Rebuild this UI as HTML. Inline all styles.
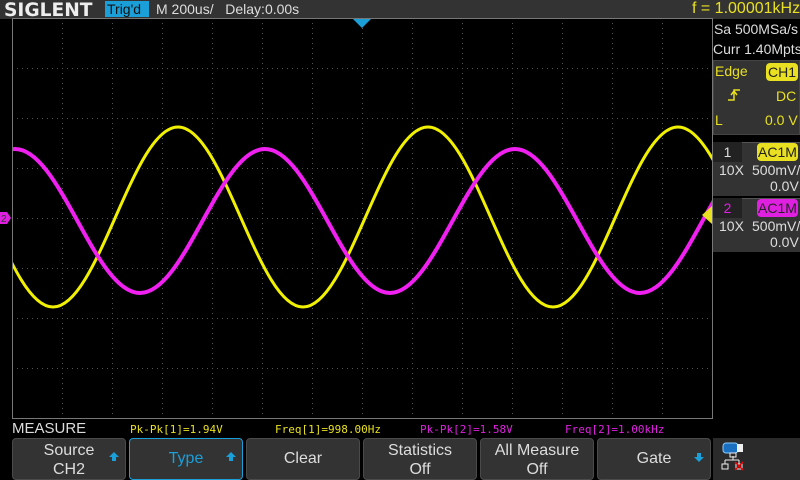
<!DOCTYPE html>
<html><head><style>
*{margin:0;padding:0;box-sizing:border-box}
body{width:800px;height:480px;background:#000;position:relative;overflow:hidden;font-family:"Liberation Sans",sans-serif}
.a{position:absolute;white-space:nowrap}
.btn{position:absolute;top:438px;height:42px;background:#333;border:1px solid #4a4a4a;border-radius:4px;color:#ddd;font-size:16px;text-align:center;line-height:19px}
.up{position:absolute;right:6px;top:13px;width:0;height:0;border-left:5px solid transparent;border-right:5px solid transparent;border-bottom:5px solid #1a9fd9}
.up:after{content:"";position:absolute;left:-2px;top:5px;width:4px;height:4px;background:#1a9fd9}
</style></head><body>
<div class="a" style="left:0;top:0;width:800px;height:19px;background:#333"></div>
<div class="a" style="left:4px;top:-1px;font-size:19px;font-weight:bold;color:#eee;font-family:'DejaVu Sans',sans-serif;transform:scaleX(0.98);transform-origin:left">SIGLENT</div>
<div class="a" style="left:105px;top:1px;width:44px;height:16px;background:#1a9fd9;color:#111;font-size:14px;line-height:16px;padding-left:2px">Trig'd</div>
<div class="a" style="left:156px;top:1px;color:#ddd;font-size:14px">M 200us/&nbsp;&nbsp; Delay:0.00s</div>
<div class="a" style="left:692px;top:0px;color:#e8e020;font-size:16px">f = 1.00001kHz</div>

<svg class="a" style="left:0;top:0" width="800" height="480">
<g stroke="#555" stroke-width="1" stroke-dasharray="1,4">
<line x1="62.5" y1="18" x2="62.5" y2="418"/><line x1="112.5" y1="18" x2="112.5" y2="418"/><line x1="162.5" y1="18" x2="162.5" y2="418"/><line x1="212.5" y1="18" x2="212.5" y2="418"/><line x1="262.5" y1="18" x2="262.5" y2="418"/><line x1="312.5" y1="18" x2="312.5" y2="418"/><line x1="362.5" y1="18" x2="362.5" y2="418"/><line x1="412.5" y1="18" x2="412.5" y2="418"/><line x1="462.5" y1="18" x2="462.5" y2="418"/><line x1="512.5" y1="18" x2="512.5" y2="418"/><line x1="562.5" y1="18" x2="562.5" y2="418"/><line x1="612.5" y1="18" x2="612.5" y2="418"/><line x1="662.5" y1="18" x2="662.5" y2="418"/>
<line x1="12" y1="68.5" x2="712" y2="68.5"/><line x1="12" y1="118.5" x2="712" y2="118.5"/><line x1="12" y1="168.5" x2="712" y2="168.5"/><line x1="12" y1="218.5" x2="712" y2="218.5"/><line x1="12" y1="268.5" x2="712" y2="268.5"/><line x1="12" y1="318.5" x2="712" y2="318.5"/><line x1="12" y1="368.5" x2="712" y2="368.5"/>
</g>
<rect x="12.5" y="18.5" width="700" height="400" fill="none" stroke="#777" stroke-width="1"/>
<clipPath id="c"><rect x="13" y="19" width="699" height="399"/></clipPath>
<g clip-path="url(#c)" fill="none">
<path d="M-72 127 c22.62 0 42.12 43.9 62.5 90 c20.38 46.1 39.88 90 62.5 90 c22.62 0 42.12 -43.9 62.5 -90 c20.38 -46.1 39.88 -90 62.5 -90 c22.62 0 42.12 43.9 62.5 90 c20.38 46.1 39.88 90 62.5 90 c22.62 0 42.12 -43.9 62.5 -90 c20.38 -46.1 39.88 -90 62.5 -90 c22.62 0 42.12 43.9 62.5 90 c20.38 46.1 39.88 90 62.5 90 c22.62 0 42.12 -43.9 62.5 -90 c20.38 -46.1 39.88 -90 62.5 -90 c22.62 0 42.12 43.9 62.5 90 c20.38 46.1 39.88 90 62.5 90 c22.62 0 42.12 -43.9 62.5 -90 c20.38 -46.1 39.88 -90 62.5 -90" stroke="#f0f000" stroke-width="3"/>
<path d="M-235 149 c22.62 0 42.12 35.1 62.5 72 c20.38 36.9 39.88 72 62.5 72 c22.62 0 42.12 -35.1 62.5 -72 c20.38 -36.9 39.88 -72 62.5 -72 c22.62 0 42.12 35.1 62.5 72 c20.38 36.9 39.88 72 62.5 72 c22.62 0 42.12 -35.1 62.5 -72 c20.38 -36.9 39.88 -72 62.5 -72 c22.62 0 42.12 35.1 62.5 72 c20.38 36.9 39.88 72 62.5 72 c22.62 0 42.12 -35.1 62.5 -72 c20.38 -36.9 39.88 -72 62.5 -72 c22.62 0 42.12 35.1 62.5 72 c20.38 36.9 39.88 72 62.5 72 c22.62 0 42.12 -35.1 62.5 -72 c20.38 -36.9 39.88 -72 62.5 -72 c22.62 0 42.12 35.1 62.5 72 c20.38 36.9 39.88 72 62.5 72 c22.62 0 42.12 -35.1 62.5 -72 c20.38 -36.9 39.88 -72 62.5 -72" stroke="#f020f0" stroke-width="4"/>
</g>
<polygon points="353,19 371,19 362,28" fill="#1a9fd9"/>
<polygon points="0,212 7,212 11,218 7,224 0,224" fill="#e020e0"/>
<text x="1" y="222" font-size="10" fill="#333" font-family="Liberation Sans">2</text>
<polygon points="712,206 712,224 702,215" fill="#e8e020"/>
</svg>

<div class="a" style="left:713px;top:19px;width:87px;height:41px;color:#ddd;font-size:14px;text-align:right;padding-right:2px;line-height:20px">Sa 500MSa/s<br>Curr 1.40Mpts</div>
<div class="a" style="left:713px;top:60px;width:87px;height:75px;background:#333;border:1px solid #444"></div>
<div class="a" style="left:715px;top:63px;color:#e8e020;font-size:14px">Edge</div>
<div class="a" style="left:766px;top:63px;width:32px;height:18px;background:#e8e020;border-radius:4px;color:#222;font-size:14px;text-align:center;line-height:18px">CH1</div>
<svg class="a" style="left:727px;top:88px" width="14" height="14"><path d="M1 12 H7 V2 H13 M4 7 L7 3 L10 7" fill="none" stroke="#e8e020" stroke-width="1.5"/></svg>
<div class="a" style="left:776px;top:88px;color:#e8e020;font-size:14px">DC</div>
<div class="a" style="left:715px;top:112px;color:#e8e020;font-size:14px">L</div>
<div class="a" style="left:765px;top:112px;color:#e8e020;font-size:14px">0.0 V</div>

<div class="a" style="left:713px;top:142px;width:87px;height:54px;background:#333;border-top:1px solid #555"></div>
<div class="a" style="left:713px;top:142px;width:29px;height:20px;background:#222;color:#ddd;font-size:14px;text-align:center;line-height:20px">1</div>
<div class="a" style="left:757px;top:143px;width:41px;height:18px;background:#e8e020;border-radius:4px;color:#222;font-size:14px;text-align:center;line-height:18px">AC1M</div>
<div class="a" style="left:719px;top:162px;color:#ddd;font-size:14px">10X</div>
<div class="a" style="left:752px;top:162px;color:#ddd;font-size:14px">500mV/</div>
<div class="a" style="left:770px;top:178px;color:#ddd;font-size:14px">0.0V</div>

<div class="a" style="left:713px;top:198px;width:87px;height:54px;background:#333;border-top:1px solid #555"></div>
<div class="a" style="left:713px;top:198px;width:29px;height:20px;background:#222;color:#e020e0;font-size:14px;text-align:center;line-height:20px">2</div>
<div class="a" style="left:757px;top:199px;width:41px;height:18px;background:#e020e0;border-radius:4px;color:#222;font-size:14px;text-align:center;line-height:18px">AC1M</div>
<div class="a" style="left:719px;top:218px;color:#ddd;font-size:14px">10X</div>
<div class="a" style="left:752px;top:218px;color:#ddd;font-size:14px">500mV/</div>
<div class="a" style="left:770px;top:234px;color:#ddd;font-size:14px">0.0V</div>

<div class="a" style="left:12px;top:420px;color:#ddd;font-size:15px">MEASURE</div>
<div class="a" style="left:130px;top:423px;color:#e8e020;font-size:11px;font-family:'DejaVu Sans Mono',monospace">Pk-Pk[1]=1.94V</div>
<div class="a" style="left:275px;top:423px;color:#e8e020;font-size:11px;font-family:'DejaVu Sans Mono',monospace">Freq[1]=998.00Hz</div>
<div class="a" style="left:420px;top:423px;color:#e020e0;font-size:11px;font-family:'DejaVu Sans Mono',monospace">Pk-Pk[2]=1.58V</div>
<div class="a" style="left:565px;top:423px;color:#e020e0;font-size:11px;font-family:'DejaVu Sans Mono',monospace">Freq[2]=1.00kHz</div>

<div class="btn" style="left:12px;width:114px;padding-top:2px">Source<br>CH2<div class="up"></div></div>
<div class="btn" style="left:129px;width:114px;border-color:#1a9fd9;color:#1a9fd9;line-height:40px">Type<div class="up"></div></div>
<div class="btn" style="left:246px;width:114px;line-height:40px">Clear</div>
<div class="btn" style="left:363px;width:114px;padding-top:2px">Statistics<br>Off</div>
<div class="btn" style="left:480px;width:114px;padding-top:2px">All Measure<br>Off</div>
<div class="btn" style="left:597px;width:114px;line-height:40px">Gate<div class="up" style="transform:rotate(180deg);top:18px"></div></div>
<div class="a" style="left:713px;top:438px;width:87px;height:42px;background:#2a2a2a"></div>
<svg class="a" style="left:720px;top:441px" width="30" height="36">
<rect x="3" y="2" width="15" height="10" rx="3" fill="#1a6fc0" stroke="#8cf" stroke-width="1"/>
<rect x="17" y="3" width="6" height="8" fill="#eee"/>
<path d="M13 15 v4 M5 19 h14 M5 19 v4 M19 19 v4" stroke="#eee" fill="none"/>
<rect x="10" y="12" width="6" height="4" fill="none" stroke="#eee"/>
<rect x="2" y="23" width="6" height="5" fill="none" stroke="#eee"/>
<rect x="16" y="23" width="6" height="5" fill="none" stroke="#eee"/>
<path d="M15 21 L23 29 M23 21 L15 29" stroke="#e00" stroke-width="1.5"/>
</svg>
</body></html>
